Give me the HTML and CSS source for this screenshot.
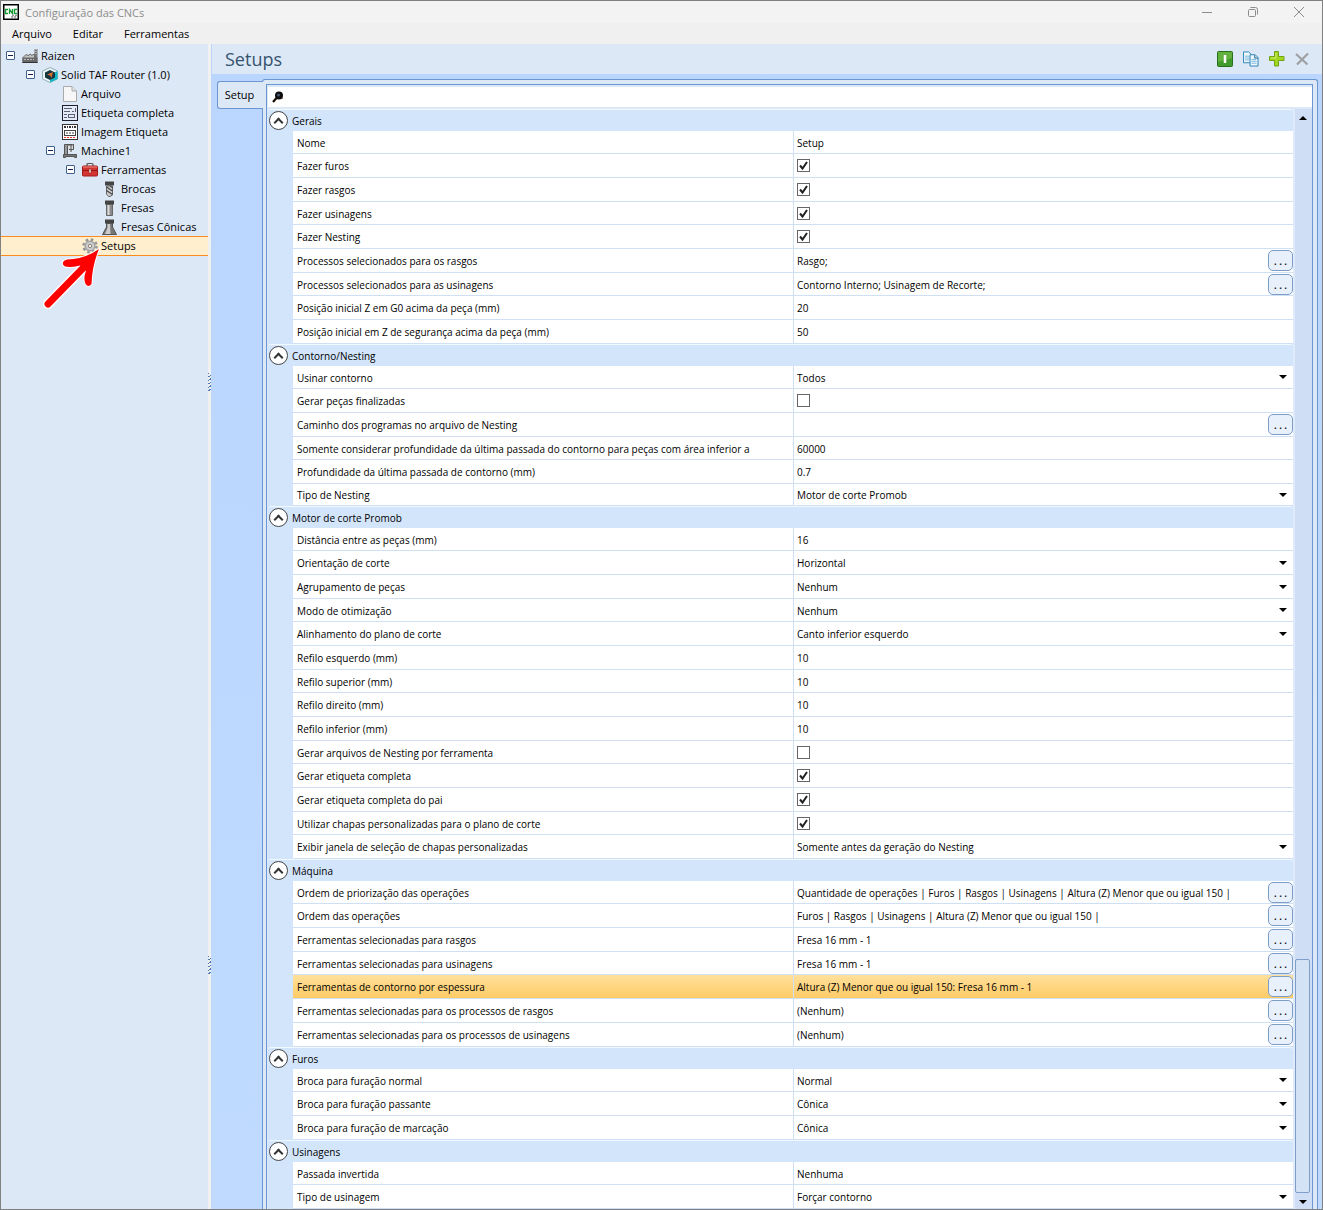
FILE: index.html
```html
<!DOCTYPE html>
<html lang="pt-BR">
<head>
<meta charset="utf-8">
<title>Configuração das CNCs</title>
<link rel="stylesheet" href="styles.css">
</head>
<body>
<div class="window">
  <header class="titlebar">
    <svg class="app-icon" width="16" height="16" viewBox="0 0 16 16" role="img" aria-label="CNC"><rect x=".75" y=".75" width="14.5" height="14.5" fill="#fff" stroke="#000" stroke-width="1.5"/><path d="M5 5.500H2.500v4H5M6.500 10V5.500L9.500 9.500V5M14 5.500h-2.500v4H14" fill="none" stroke="#159a32" stroke-width="1.300"/><path d="M8 13h6M9 11.500h5" stroke="#999" stroke-width="1.500" stroke-dasharray="2 1"/></svg>
    <h1 class="titlebar-text">Configuração das CNCs</h1>
    <div class="window-buttons">
      <button type="button" aria-label="Minimizar"><svg width="12" height="12" viewBox="0 0 12 12"><path d="M1 6.500h10"/></svg></button>
      <button type="button" aria-label="Restaurar"><svg width="12" height="12" viewBox="0 0 12 12"><rect x="1.500" y="3.500" width="7" height="7" rx="1"/><path d="M3.500 1.500h5a2 2 0 0 1 2 2v5"/></svg></button>
      <button type="button" aria-label="Fechar"><svg width="12" height="12" viewBox="0 0 12 12"><path d="M1 1l10 10M11 1L1 11"/></svg></button>
    </div>
  </header>
  <nav class="menubar">
    <button type="button">Arquivo</button>
    <button type="button">Editar</button>
    <button type="button">Ferramentas</button>
  </nav>
  <div class="workspace">
    <aside class="sidebar">
      <ul class="tree">
        <li class="node level-0"><button type="button" class="toggle" aria-label="Recolher"></button>
          <svg width="16" height="16" viewBox="0 0 16 16"><path d="M1 9.500L4 6.500l2 1 2.500-1.500 1 1.500L12.500 6v8.500H1z" fill="#c4c4c4" stroke="#666"/><path d="M12.500 1h3v13.500h-3z" fill="#777"/><path d="M14 1v6" stroke="#e4e4e4" stroke-dasharray="1 1"/><path d="M.5 9.500h15v5.500H.5z" fill="#686868"/><path d="M2 11.500h10" stroke="#bbb" stroke-dasharray="2 1"/><path d="M.5 14.500h15" stroke="#333"/></svg>
          <span>Raizen</span></li>
        <li class="node level-1"><button type="button" class="toggle" aria-label="Recolher"></button>
          <svg width="16" height="16" viewBox="0 0 16 16"><path d="M8 .5l7.500 3.500v8L8 15.500.5 12V4z" fill="#eef5f7" stroke="#8fb0b8"/><path d="M15.500 4v8L8 15.500V13l4.500-3V5.500z" fill="#12b9c4"/><path d="M8 3l5 2.500v5L8 13l-5-2.500v-5z" fill="#143641"/><path d="M5 7.500L11 5 9.500 11 8 8.500z" fill="#dc7032"/></svg>
          <span>Solid TAF Router (1.0)</span></li>
        <li class="node level-2">
          <svg width="16" height="16" viewBox="0 0 16 16"><path d="M1.500 .5H10l4.500 4.500v10.500h-13z" fill="#f7f7f7" stroke="#aaa"/><path d="M10 .5v4.500h4.500" fill="#e2e2e2" stroke="#aaa"/></svg>
          <span>Arquivo</span></li>
        <li class="node level-2">
          <svg width="16" height="16" viewBox="0 0 16 16"><rect x=".5" y=".5" width="15" height="15" fill="#e4ebf6" stroke="#1c1e2b"/><path d="M2 3.500h8M2 6.500h6M2 9.500h3M2 12.500h3M10 6.500h2M13.500 3v4" stroke="#5b6276"/><rect x="6.500" y="9.500" width="6" height="3" fill="none" stroke="#5b6276"/></svg>
          <span>Etiqueta completa</span></li>
        <li class="node level-2">
          <svg width="16" height="16" viewBox="0 0 16 16"><rect x=".5" y=".5" width="15" height="15" fill="#fff" stroke="#333"/><path d="M2 3h12" stroke="#333" stroke-width="2" stroke-dasharray="2 1 1 1"/><rect x="2.500" y="6.500" width="11" height="5" fill="#fff" stroke="#444"/><path d="M4 9h8" stroke="#444" stroke-dasharray="2 1"/><path d="M2 13.500h12" stroke="#d33" stroke-dasharray="2 1"/></svg>
          <span>Imagem Etiqueta</span></li>
        <li class="node level-2"><button type="button" class="toggle" aria-label="Recolher"></button>
          <svg width="16" height="16" viewBox="0 0 16 16"><path d="M2.500 1.500h8v1h-5V12h-3z" fill="#999" stroke="#555"/><path d="M6 2.500h5.500v4H10V9H8V6.500H6z" fill="#ddd"/><path d="M9 1v8M11.500 1v5.500H7" fill="none" stroke="#555"/><path d="M1.500 11.500h13v3h-2v-1h-9v1h-2z" fill="#777" stroke="#555"/></svg>
          <span>Machine1</span></li>
        <li class="node level-3"><button type="button" class="toggle" aria-label="Recolher"></button>
          <svg width="16" height="16" viewBox="0 0 16 16"><path d="M5 4V2.500Q5 1.500 6 1.500h4q1 0 1 1V4" fill="none" stroke="#555" stroke-width="1.200"/><rect x=".5" y="4" width="15" height="10" rx="1" fill="#d33632" stroke="#a21a18"/><path d="M1 5h14" stroke="#f08a80"/><path d="M1 8.500h14" stroke="#8e1512"/><rect x="7" y="7" width="2" height="4" fill="#f4e9e6" stroke="#8e1512" stroke-width=".5"/></svg>
          <span>Ferramentas</span></li>
        <li class="node level-4">
          <svg width="16" height="16" viewBox="0 0 16 16"><path d="M4.500 5h6v9L8 15.500H6.500L4.500 13z" fill="#ccc" stroke="#666"/><path d="M4.500 6l6 4M4.500 9.500l6 4M8 5l3 2" stroke="#444" stroke-width="1.200"/><path d="M3 .5h9v4H3z" fill="#444"/></svg>
          <span>Brocas</span></li>
        <li class="node level-4">
          <svg width="16" height="16" viewBox="0 0 16 16"><path d="M4.500 4h6v11.500h-6z" fill="#8a8a8a" stroke="#666"/><path d="M6.500 5v10" stroke="#ddd" stroke-width="2"/><path d="M3 .5h9v4H3z" fill="#444"/></svg>
          <span>Fresas</span></li>
        <li class="node level-4">
          <svg width="16" height="16" viewBox="0 0 16 16"><path d="M4.500 4h6v4l4 7.500H.5L4.500 8z" fill="#777" stroke="#555"/><path d="M5.500 5H8l.5 10H3L5.500 9z" fill="#ccc"/><path d="M3 .5h9v4H3z" fill="#444"/></svg>
          <span>Fresas Cônicas</span></li>
        <li class="node level-3 selected">
          <svg width="16" height="16" viewBox="0 0 16 16"><circle cx="8" cy="8" r="6.500" fill="none" stroke="#969696" stroke-width="2.500" stroke-dasharray="2.550 2.550"/><circle cx="8" cy="8" r="4.800" fill="#ccc" stroke="#a3a3a3" stroke-width="1.500"/><circle cx="8" cy="8" r="1.700" fill="#fff0cf" stroke="#888"/></svg>
          <span>Setups</span></li>
      </ul>
      <svg class="pointer" width="62" height="66" viewBox="0 0 62 66"><g stroke="#fff" stroke-width="10" stroke-linecap="round" stroke-linejoin="round"><path d="M6 60L43 22"/></g><path d="M57 5Q43 15 25 15.500Q20 17 21 20.500Q23 25 38 21.500L44 27Q41 34 43.500 40Q46.500 44 49.500 40Q50 22 57 5z" fill="#fe0000" stroke="#fff" stroke-width="2" paint-order="stroke"/><path d="M6 60L46 19" stroke="#fe0000" stroke-width="7" stroke-linecap="round"/></svg>
    </aside>
    <div class="splitter"><i class="grip"></i><i class="grip"></i></div>
    <main class="main">
      <div class="main-header">
        <h2>Setups</h2>
        <div class="tools">
          <button type="button" aria-label="Ativar"><svg width="16" height="16" viewBox="0 0 16 16"><rect x=".5" y=".5" width="15" height="15" rx="1" fill="#439a2c" stroke="#27701b"/><path d="M1 1h14v6L1 11z" fill="#62b13f"/><path d="M8 4v8" stroke="#fff" stroke-width="2.500"/></svg></button>
          <button type="button" aria-label="Copiar"><svg width="16" height="16" viewBox="0 0 17 16"><path d="M.5 .5H6l3 3v8.500H.5z" fill="#eef7fd" stroke="#2580b8"/><path d="M2 5h5M2 7h5M2 9h5" stroke="#79b5dc"/><path d="M7.500 3.500H13l3 3v9H7.500z" fill="#eef7fd" stroke="#2580b8"/><path d="M12.500 4v3H16" fill="none" stroke="#135d8c"/><path d="M9 8.500h5M9 10.500h5.500M9 12.500h5.500" stroke="#79b5dc"/></svg></button>
          <button type="button" aria-label="Adicionar"><svg width="16" height="16" viewBox="0 0 16 16"><path d="M5.500 .5h4v5h5.500v4H9.500V15h-4V9.500H.5v-4h5z" fill="#a3d51f" stroke="#6ea511"/><path d="M7 2v5H2" fill="none" stroke="#d0ee6d"/></svg></button>
          <button type="button" aria-label="Excluir"><svg width="14" height="14" viewBox="0 0 14 14"><path d="M1 2l11.500 10.500M13 1.500L2 12.500" stroke="#9d9fa3" stroke-width="2.200"/></svg></button>
        </div>
      </div>
      <div class="content">
        <div class="tabs"><button type="button" class="tab">Setup</button></div>
        <section class="panel">
          <div class="frame">
            <label class="search"><svg width="12" height="12" viewBox="0 0 12 12"><circle cx="7" cy="4.500" r="4" fill="#0b0b10"/><circle cx="6.500" cy="4" r="1.500" fill="#47566e"/><path d="M4.500 7L1 11" stroke="#1a0d05" stroke-width="2.200"/><path d="M10 8l1-1" stroke="#c77a35"/></svg><input type="search" aria-label="Pesquisar"></label>
            <div class="scroller">
              <div class="groups">
                <section class="group">
                  <h3><button type="button" class="fold" aria-label="Recolher"></button>Gerais</h3>
                  <div class="rows">
                    <div class="row"><label for="a1">Nome</label><div class="value"><input type="text" id="a1" value="Setup"></div></div>
                    <div class="row"><label for="a2">Fazer furos</label><div class="value"><input type="checkbox" id="a2" checked></div></div>
                    <div class="row"><label for="a3">Fazer rasgos</label><div class="value"><input type="checkbox" id="a3" checked></div></div>
                    <div class="row"><label for="a4">Fazer usinagens</label><div class="value"><input type="checkbox" id="a4" checked></div></div>
                    <div class="row"><label for="a5">Fazer Nesting</label><div class="value"><input type="checkbox" id="a5" checked></div></div>
                    <div class="row"><label for="a6">Processos selecionados para os rasgos</label><div class="value"><input type="text" id="a6" value="Rasgo;" readonly><button type="button" class="more">...</button></div></div>
                    <div class="row"><label for="a7">Processos selecionados para as usinagens</label><div class="value"><input type="text" id="a7" value="Contorno Interno; Usinagem de Recorte;" readonly><button type="button" class="more">...</button></div></div>
                    <div class="row"><label for="a8">Posição inicial Z em G0 acima da peça (mm)</label><div class="value"><input type="text" id="a8" value="20"></div></div>
                    <div class="row"><label for="a9">Posição inicial em Z de segurança acima da peça (mm)</label><div class="value"><input type="text" id="a9" value="50"></div></div>
                  </div>
                </section>
                <section class="group tight">
                  <h3><button type="button" class="fold" aria-label="Recolher"></button>Contorno/Nesting</h3>
                  <div class="rows">
                    <div class="row"><label for="b1">Usinar contorno</label><div class="value"><select id="b1"><option>Todos</option></select></div></div>
                    <div class="row"><label for="b2">Gerar peças finalizadas</label><div class="value"><input type="checkbox" id="b2"></div></div>
                    <div class="row"><label for="b3">Caminho dos programas no arquivo de Nesting</label><div class="value"><input type="text" id="b3" readonly><button type="button" class="more">...</button></div></div>
                    <div class="row"><label for="b4">Somente considerar profundidade da última passada do contorno para peças com área inferior a</label><div class="value"><input type="text" id="b4" value="60000"></div></div>
                    <div class="row"><label for="b5">Profundidade da última passada de contorno (mm)</label><div class="value"><input type="text" id="b5" value="0.7"></div></div>
                    <div class="row"><label for="b6">Tipo de Nesting</label><div class="value"><select id="b6"><option>Motor de corte Promob</option></select></div></div>
                  </div>
                </section>
                <section class="group">
                  <h3><button type="button" class="fold" aria-label="Recolher"></button>Motor de corte Promob</h3>
                  <div class="rows">
                    <div class="row"><label for="c1">Distância entre as peças (mm)</label><div class="value"><input type="text" id="c1" value="16"></div></div>
                    <div class="row"><label for="c2">Orientação de corte</label><div class="value"><select id="c2"><option>Horizontal</option></select></div></div>
                    <div class="row"><label for="c3">Agrupamento de peças</label><div class="value"><select id="c3"><option>Nenhum</option></select></div></div>
                    <div class="row"><label for="c4">Modo de otimização</label><div class="value"><select id="c4"><option>Nenhum</option></select></div></div>
                    <div class="row"><label for="c5">Alinhamento do plano de corte</label><div class="value"><select id="c5"><option>Canto inferior esquerdo</option></select></div></div>
                    <div class="row"><label for="c6">Refilo esquerdo (mm)</label><div class="value"><input type="text" id="c6" value="10"></div></div>
                    <div class="row"><label for="c7">Refilo superior (mm)</label><div class="value"><input type="text" id="c7" value="10"></div></div>
                    <div class="row"><label for="c8">Refilo direito (mm)</label><div class="value"><input type="text" id="c8" value="10"></div></div>
                    <div class="row"><label for="c9">Refilo inferior (mm)</label><div class="value"><input type="text" id="c9" value="10"></div></div>
                    <div class="row"><label for="c10">Gerar arquivos de Nesting por ferramenta</label><div class="value"><input type="checkbox" id="c10"></div></div>
                    <div class="row"><label for="c11">Gerar etiqueta completa</label><div class="value"><input type="checkbox" id="c11" checked></div></div>
                    <div class="row"><label for="c12">Gerar etiqueta completa do pai</label><div class="value"><input type="checkbox" id="c12" checked></div></div>
                    <div class="row"><label for="c13">Utilizar chapas personalizadas para o plano de corte</label><div class="value"><input type="checkbox" id="c13" checked></div></div>
                    <div class="row"><label for="c14">Exibir janela de seleção de chapas personalizadas</label><div class="value"><select id="c14"><option>Somente antes da geração do Nesting</option></select></div></div>
                  </div>
                </section>
                <section class="group">
                  <h3><button type="button" class="fold" aria-label="Recolher"></button>Máquina</h3>
                  <div class="rows">
                    <div class="row"><label for="d1">Ordem de priorização das operações</label><div class="value"><input type="text" id="d1" value="Quantidade de operações | Furos | Rasgos | Usinagens | Altura (Z) Menor que ou igual 150 |" readonly><button type="button" class="more">...</button></div></div>
                    <div class="row"><label for="d2">Ordem das operações</label><div class="value"><input type="text" id="d2" value="Furos | Rasgos | Usinagens | Altura (Z) Menor que ou igual 150 |" readonly><button type="button" class="more">...</button></div></div>
                    <div class="row"><label for="d3">Ferramentas selecionadas para rasgos</label><div class="value"><input type="text" id="d3" value="Fresa 16 mm - 1" readonly><button type="button" class="more">...</button></div></div>
                    <div class="row"><label for="d4">Ferramentas selecionadas para usinagens</label><div class="value"><input type="text" id="d4" value="Fresa 16 mm - 1" readonly><button type="button" class="more">...</button></div></div>
                    <div class="row active"><label for="d5">Ferramentas de contorno por espessura</label><div class="value"><input type="text" id="d5" value="Altura (Z) Menor que ou igual 150: Fresa 16 mm - 1" readonly><button type="button" class="more">...</button></div></div>
                    <div class="row"><label for="d6">Ferramentas selecionadas para os processos de rasgos</label><div class="value"><input type="text" id="d6" value="(Nenhum)" readonly><button type="button" class="more">...</button></div></div>
                    <div class="row"><label for="d7">Ferramentas selecionadas para os processos de usinagens</label><div class="value"><input type="text" id="d7" value="(Nenhum)" readonly><button type="button" class="more">...</button></div></div>
                  </div>
                </section>
                <section class="group">
                  <h3><button type="button" class="fold" aria-label="Recolher"></button>Furos</h3>
                  <div class="rows">
                    <div class="row"><label for="e1">Broca para furação normal</label><div class="value"><select id="e1"><option>Normal</option></select></div></div>
                    <div class="row"><label for="e2">Broca para furação passante</label><div class="value"><select id="e2"><option>Cônica</option></select></div></div>
                    <div class="row"><label for="e3">Broca para furação de marcação</label><div class="value"><select id="e3"><option>Cônica</option></select></div></div>
                  </div>
                </section>
                <section class="group">
                  <h3><button type="button" class="fold" aria-label="Recolher"></button>Usinagens</h3>
                  <div class="rows">
                    <div class="row"><label for="f1">Passada invertida</label><div class="value"><input type="text" id="f1" value="Nenhuma"></div></div>
                    <div class="row"><label for="f2">Tipo de usinagem</label><div class="value"><select id="f2"><option>Forçar contorno</option></select></div></div>
                  </div>
                </section>
              </div>
              <div class="scrollbar" aria-hidden="true">
                <i class="arrow up"></i>
                <div class="track"><div class="thumb"></div></div>
                <i class="arrow down"></i>
              </div>
            </div>
          </div>
        </section>
      </div>
    </main>
  </div>
</div>
</body>
</html>
```
FILE: styles.css
```css
:root {
  --pale: #dde8f6;
  --sky: #bdd9ff;
  --group: #d3e5fb;
  --line: #cfdff4;
  --edge: #6b96d4;
}

* { box-sizing: border-box; }

body {
  margin: 0;
  font-family: "Open Sans", "Segoe UI", sans-serif;
  font-size: 11px;
  color: #000;
}

button, input, select {
  margin: 0;
  padding: 0;
  border: 0;
  border-radius: 0;
  background: none;
  font: inherit;
  color: inherit;
}

h1, h2, h3, ul { margin: 0; padding: 0; font-weight: 400; list-style: none; }
svg { display: block; flex: none; }

.window {
  display: flex;
  flex-direction: column;
  height: 100vh;
  border: 1px solid #808080;
  overflow: hidden;
  background: #f0f0f0;
}

.titlebar {
  display: flex;
  align-items: center;
  height: 22px;
  flex: none;
  padding-left: 2px;
  background: #f3f3f3;
  color: #8c8c8c;
}
.titlebar-text { flex: 1; margin-left: 6px; font-size: 11px; }
.window-buttons { display: flex; }
.window-buttons button {
  display: flex;
  align-items: center;
  justify-content: center;
  width: 46px;
  height: 20px;
}
.window-buttons svg { fill: none; stroke: #8c8c8c; }

.menubar {
  display: flex;
  gap: 21px;
  height: 21px;
  flex: none;
  padding: 0 0 1px 11px;
}

.workspace { display: flex; flex: 1; min-height: 0; }

.sidebar {
  position: relative;
  width: 207px;
  flex: none;
  background: var(--pale);
}
.tree { padding-top: 2px; }
.node {
  display: flex;
  align-items: center;
  gap: 3px;
  height: 19px;
  padding-left: 21px;
  white-space: nowrap;
}
.node.level-1 { padding-left: 41px; }
.node.level-2 { padding-left: 61px; }
.node.level-3 { padding-left: 81px; }
.node.level-4 { padding-left: 101px; }
.node.selected {
  height: 20px;
  padding-bottom: 1px;
  background: #ffefcf;
  border: solid #ff8a1c;
  border-width: 1px 0;
}
.toggle {
  display: grid;
  place-items: center;
  width: 9px;
  height: 9px;
  flex: none;
  margin: 0 4px 0 -16px;
  border: 1px solid #3f5f8c;
  border-radius: 1px;
  background: #fff;
}
.toggle::after { content: ""; width: 5px; height: 1px; background: #10204a; }

.pointer { position: absolute; left: 41px; top: 200px; fill: none; }

.splitter {
  display: flex;
  flex-direction: column;
  gap: 565px;
  width: 3px;
  flex: none;
  padding-top: 329px;
  background: #f0f0f0;
}
.grip {
  height: 18px;
  flex: none;
  background: repeating-linear-gradient(150deg, #4d79b5 0 1px, #f0f0f0 1px 3px);
}

.main {
  display: flex;
  flex-direction: column;
  flex: 1;
  min-width: 0;
  background: linear-gradient(#bad6fe, #c0daff);
}
.main-header {
  display: flex;
  align-items: center;
  justify-content: space-between;
  height: 30px;
  flex: none;
  margin-left: 1px;
  padding: 0 13px;
  background: var(--pale);
}
.main-header h2 { font-size: 18px; color: #35536e; }
.tools { display: flex; align-items: center; gap: 10px; }

.content {
  display: flex;
  flex: 1;
  min-height: 0;
  padding: 5px 4px 0 6px;
}
.tabs { z-index: 1; padding-top: 2px; }
.tab {
  width: 46px;
  height: 28px;
  margin-right: -1px;
  padding: 0 2px 2px 0;
  border: 1px solid var(--edge);
  border-right: 0;
  border-radius: 3px 0 0 3px;
  background: var(--pale);
}
.panel {
  flex: 1;
  min-width: 0;
  padding: 4px 4px 0 3px;
  border: 1px solid var(--edge);
  border-bottom: 0;
  border-radius: 3px 3px 0 0;
  background: var(--pale);
}
.frame {
  display: flex;
  flex-direction: column;
  height: 100%;
  padding: 2px 0 0 1px;
  border: 1px solid var(--edge);
  border-bottom: 0;
  background: var(--pale);
}
.search {
  display: flex;
  align-items: center;
  height: 20px;
  flex: none;
  margin-bottom: 2px;
  padding-left: 4px;
  background: #fff;
}
.search input { flex: 1; outline: 0; }

.scroller { display: flex; flex: 1; min-height: 0; background: #cfdef4; }
.groups { flex: 1; min-width: 0; overflow: hidden; }
.group { background: var(--group); }
.group h3 {
  display: flex;
  align-items: center;
  gap: 4px;
  height: 22px;
  padding-left: 1px;
  border-top: 1px solid #f2f8ff;
  border-radius: 3px 3px 0 0;
}
.group h3, .row { font-size: 10px; }
.fold {
  display: grid;
  place-items: center;
  width: 19px;
  height: 19px;
  flex: none;
  border: 1px solid #444;
  border-radius: 50%;
  background: #fff;
}
.fold::after {
  content: "";
  width: 5px;
  height: 5px;
  margin-top: 3px;
  border: solid #333;
  border-width: 2px 0 0 2px;
  transform: rotate(45deg);
}

.rows { margin-left: 25px; }
.row {
  display: grid;
  grid-template-columns: 1fr 1fr;
  height: 24px;
  border-bottom: 1px solid var(--line);
  background: #fff;
}
.row:nth-child(3n+1):not(:last-child) { height: 23px; }
.tight .row:last-child { height: 22px; }
.row.active { background: linear-gradient(#ffe09c, #ffcb66); }
.row label {
  display: flex;
  align-items: center;
  padding: 1px 0 0 4px;
  white-space: nowrap;
}
.value {
  display: flex;
  align-items: center;
  min-width: 0;
  padding-left: 3px;
  border-left: 1px solid var(--line);
}
.value input[type="text"] { flex: 1; min-width: 0; padding-top: 1px; outline: 0; }
.value select {
  flex: 1;
  align-self: stretch;
  padding-top: 1px;
  appearance: none;
  background: url("data:image/svg+xml,%3Csvg xmlns='http://www.w3.org/2000/svg' width='8' height='4'%3E%3Cpath d='M0 0h8L4 4z'/%3E%3C/svg%3E") no-repeat right 6px center;
}
.value input[type="checkbox"] {
  appearance: none;
  width: 13px;
  height: 13px;
  border: 1px solid #666;
  background: #fff;
}
.value input[type="checkbox"]:checked {
  background: url("data:image/svg+xml,%3Csvg xmlns='http://www.w3.org/2000/svg' width='11' height='11'%3E%3Cpath d='M2 5.500L4.500 8.500 9 2' fill='none' stroke='%23222' stroke-width='2'/%3E%3C/svg%3E") #fff;
}
.more {
  width: 25px;
  height: 21px;
  flex: none;
  border: 1px solid #7d9cc6;
  border-radius: 5px;
  background: #e8f0fc;
  font-size: 12px;
  line-height: 19px;
  letter-spacing: 2px;
  text-indent: 2px;
}

.scrollbar {
  display: flex;
  flex-direction: column;
  align-items: center;
  width: 19px;
  flex: none;
  padding: 7px 2px 5px 0;
  border-left: 2px solid #dfebfb;
}
.arrow { border: solid transparent; border-width: 0 4px; flex: none; }
.arrow.up { border-bottom: 4px solid #000; }
.arrow.down { border-top: 4px solid #000; }
.track {
  display: flex;
  flex-direction: column;
  justify-content: flex-end;
  flex: 1;
  padding: 8px 0 7px;
}
.thumb {
  width: 15px;
  height: 22%;
  border: 1px solid #7f9dc8;
  border-radius: 2px;
  background: #d3e2f4;
}
```
